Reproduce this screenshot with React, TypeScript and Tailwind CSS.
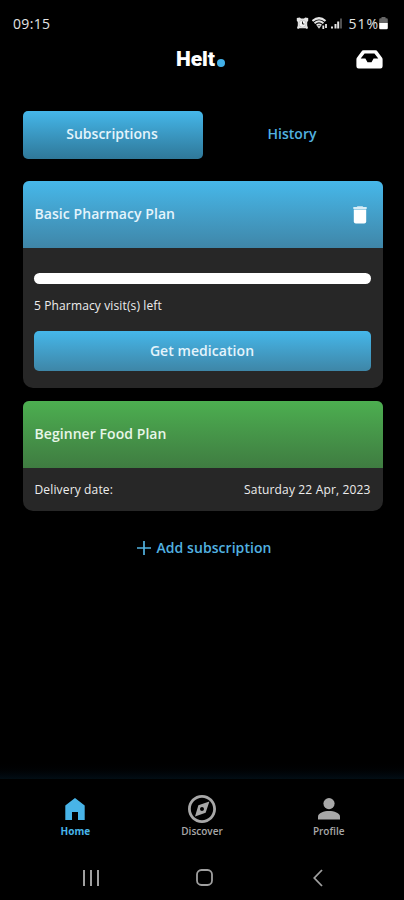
import React, { useState } from 'react';

type IconProps = { className?: string };

const AlarmIcon = ({ className }: IconProps) => (
  <svg viewBox="0 0 13 13" className={className}>
    <path
      fill="#e4e4e4"
      d="M.8 1 3.800.5l1.200 1h3l1.200-1 3 .5v2.800l-1 1.200v3.500l.8 2.500-1 1-1.500-.8H3.500l-1.500.8-1-1 .8-2.500V5l-1-1.200Z"
    />
    <circle cx="6.500" cy="6.700" r="3.500" fill="#f4f4f4" stroke="#999" strokeWidth=".4" />
    <path d="M6.500 4.500v2.500H8.300" fill="none" stroke="#222" strokeWidth="1" />
  </svg>
);

const WifiIcon = ({ className }: IconProps) => (
  <svg viewBox="0 0 16 13" className={className} fill="none" stroke="currentColor">
    <path d="M.5 4Q7-1.500 13.500 4" strokeWidth="2.200" />
    <path d="M2.500 6.200Q7 2.500 11.500 6.200" strokeWidth="1.900" />
    <path d="M4.600 8.400Q7 6.300 9.400 8.400" strokeWidth="1.800" />
    <path d="M5.500 9.300h3L7 11.300Z" fill="currentColor" strokeWidth=".6" />
    <path d="M11.300 8.500v3.500M14 7v4" strokeWidth="1.800" />
  </svg>
);

const SignalIcon = ({ className }: IconProps) => (
  <svg viewBox="0 0 12 12" className={className} fill="currentColor">
    <path d="M0 9.500h2v2H0ZM3.500 7h2v4.500h-2ZM6.200 4.500h2v7h-2Z" />
    <path d="M9 1.500h2v10H9Z" opacity=".35" />
  </svg>
);

const BatteryIcon = ({ className }: IconProps) => (
  <svg viewBox="0 0 9 13" className={className}>
    <path d="M2.500 0h4v1.300h1A1.300 1.300 0 0 1 8.800 2.600V6H.2V2.600a1.300 1.300 0 0 1 1.300-1.300h1Z" fill="#666" />
    <path d="M.2 6h8.600v5a1.300 1.300 0 0 1-1.300 1.300h-6A1.300 1.300 0 0 1 .2 11Z" fill="#fff" />
  </svg>
);

const InboxIcon = ({ className }: IconProps) => (
  <svg viewBox="0 0 27 19" className={className}>
    <path
      fillRule="evenodd"
      fill="#fff"
      d="M7.500.3h12a2.400 2.400 0 0 1 2 1.100l4.600 6.400c.3.500.5 1 .5 1.600v6.900a2.200 2.200 0 0 1-2.200 2.200H2.600A2.200 2.200 0 0 1 .4 16.300V9.400c0-.6.200-1.100.5-1.600l4.600-6.400a2.400 2.400 0 0 1 2-1.100ZM8.600 3.500 4.700 8.600h4.700l2.100 3.700h4l2.100-3.700h4.700l-3.900-5.100Z"
    />
  </svg>
);

const TrashIcon = ({ className }: IconProps) => (
  <svg viewBox="0 0 14 18" className={className} fill="#fff">
    <path d="M4.500.3h5l.8.7h3.400v2H.3V1h3.400Z" opacity=".8" />
    <path d="M.8 3.600h12.400v12a2 2 0 0 1-2 2H2.800a2 2 0 0 1-2-2Z" />
  </svg>
);

const HomeIcon = ({ className }: IconProps) => (
  <svg viewBox="0 0 20 22" className={className} fill="currentColor">
    <path d="M10 0 19.700 7.500V22H13v-8H7v8H.3V7.500Z" />
  </svg>
);

const CompassIcon = ({ className }: IconProps) => (
  <svg viewBox="2 2 20 20" className={className} fill="currentColor">
    <path d="M12 2C6.480 2 2 6.480 2 12s4.480 10 10 10 10-4.480 10-10S17.520 2 12 2zm0 18c-4.410 0-8-3.590-8-8s3.590-8 8-8 8 3.590 8 8-3.590 8-8 8z" />
    <path
      fillRule="evenodd"
      d="M7 17.300l2.400-8 7.900-2.600-2.700 8L7 17.300zM12 10.600c.8 0 1.400.6 1.400 1.400s-.6 1.400-1.400 1.400-1.400-.6-1.400-1.400.6-1.400 1.400-1.400z"
    />
  </svg>
);

const ProfileIcon = ({ className }: IconProps) => (
  <svg viewBox="0 0 22 22" className={className} fill="currentColor">
    <circle cx="11" cy="5.600" r="5.600" />
    <path d="M0 21.500v-3C0 15 6 13 11 13s11 2 11 5.500v3Z" />
  </svg>
);

const navItems = [
  { label: 'Home', Icon: HomeIcon, iconClass: 'w-5 h-[22px]' },
  { label: 'Discover', Icon: CompassIcon, iconClass: 'size-7' },
  { label: 'Profile', Icon: ProfileIcon, iconClass: 'size-[22px]' },
];

const StatusBar = () => (
  <div className="flex h-[46px] items-center justify-between pr-4 pl-[13px] text-[#e4e4e4]">
    <span className="text-[14px] tracking-[0.35px]">09:15</span>
    <div className="flex items-center">
      <AlarmIcon className="mr-[3px] size-[13px]" />
      <WifiIcon className="mr-[3px] h-[13px] w-4" />
      <SignalIcon className="mr-[5px] size-3" />
      <span className="text-[14px] tracking-[1px]">51%</span>
      <BatteryIcon className="h-[13px] w-[9px]" />
    </div>
  </div>
);

const Header = () => (
  <header className="grid h-[26px] grid-cols-3 items-center pr-[21px]">
    <span />
    <div className="flex items-baseline justify-center pt-px pl-[18px] font-['Roboto'] text-[21px] leading-none font-black text-white">
      Helt
      <span className="ml-[2px] size-2 translate-y-px rounded-full bg-[#42b0e8]" />
    </div>
    <button className="justify-self-end">
      <InboxIcon className="h-[19px] w-[27px]" />
    </button>
  </header>
);

const App: React.FC = () => {
  const [tab, setTab] = useState('Subscriptions');
  const [page, setPage] = useState('Home');

  return (
    <div className="flex h-[900px] w-[404px] flex-col overflow-hidden bg-black font-['Open_Sans',sans-serif]">
      <StatusBar />
      <Header />

      <main className="flex-1 pt-[39px] pr-[21.5px] pl-[22.5px]">
        <div className="grid h-[48px] grid-cols-2">
          {['Subscriptions', 'History'].map((name) => (
            <button
              key={name}
              onClick={() => setTab(name)}
              className={`rounded-[5px] pr-px pb-[3px] text-[14px] font-semibold ${
                tab === name
                  ? 'bg-linear-to-b from-[#45b7ea] to-[#2f7899] text-[#e4f4fc]'
                  : 'text-[#52b2e0]'
              }`}
            >
              {name}
            </button>
          ))}
        </div>

        <section className="mt-[22px] h-[207px] overflow-hidden rounded-t-[6px] rounded-b-[10px] bg-[#272727]">
          <div className="flex h-[67px] items-center justify-between bg-linear-to-b from-[#46b8ea] to-[#3f86a8] pr-4 pl-3">
            <h2 className="pb-[2px] text-[14px] font-semibold tracking-[0.06px] text-[#e4f4fc]">Basic Pharmacy Plan</h2>
            <TrashIcon className="h-[18px] w-[14px]" />
          </div>
          <div className="px-[11.5px] pt-[25px]">
            <div className="h-[11px] rounded-full bg-white" />
            <p className="mt-[13px] text-[12px] leading-[18px] tracking-[0.13px] text-[#ededed]">5 Pharmacy visit(s) left</p>
            <button className="mt-4 h-10 w-full rounded-[5px] bg-linear-to-b from-[#45b7ea] to-[#3e86a7] pr-px pb-[2px] text-[14px] font-semibold tracking-[0.06px] text-[#e4f4fc]">
              Get medication
            </button>
          </div>
        </section>

        <section className="mt-[13px] h-[110px] overflow-hidden rounded-t-[6px] rounded-b-[10px] bg-[#272727]">
          <div className="flex h-[67px] items-center bg-linear-to-b from-[#4caf50] to-[#3f7c41] px-3">
            <h2 className="pb-[2px] text-[14px] font-semibold tracking-[0.06px] text-[#e8f6e8]">Beginner Food Plan</h2>
          </div>
          <div className="flex h-[43px] items-center justify-between px-3 text-[12px] tracking-[0.15px] text-[#ededed]">
            <span>Delivery date:</span>
            <span>Saturday 22 Apr, 2023</span>
          </div>
        </section>

        <button className="mt-[26px] ml-[114.5px] flex items-center gap-[5.500px] text-[14px] font-semibold tracking-[0.06px] text-[#52b2e0]">
          <svg viewBox="0 0 14 14" className="size-[14px]" stroke="currentColor" strokeWidth="1.700">
            <path d="M7 0v14M0 7h14" />
          </svg>
          Add subscription
        </button>
      </main>

      <div className="h-[20px] bg-linear-to-b from-black to-[#020e15]" />
      <nav className="flex h-[67px] px-3 pt-[15px]">
        {navItems.map(({ label, Icon, iconClass }) => (
          <button
            key={label}
            onClick={() => setPage(label)}
            className={`flex flex-1 flex-col items-center text-[10px] ${
              page === label ? 'font-bold text-[#48b4e8]' : 'font-semibold text-[#a8a8a8]'
            }`}
          >
            <span className="flex h-[30px] items-center">
              <Icon className={iconClass} />
            </span>
            <span className="leading-[15px]">{label}</span>
          </button>
        ))}
      </nav>

      <div className="flex h-[54px] items-center justify-between pt-[9px] pr-[81px] pl-[83px] text-[#a0a0a0]">
        <svg viewBox="0 0 16 16" className="size-4" fill="none" stroke="currentColor" strokeWidth="2">
          <path d="M1 0v16M8 0v16M15 0v16" />
        </svg>
        <svg viewBox="0 0 17 17" className="mr-1 size-[17px]" fill="none" stroke="currentColor" strokeWidth="1.800">
          <rect x="1" y="1" width="15" height="15" rx="4.500" />
        </svg>
        <svg viewBox="0 0 10 18" className="h-[18px] w-[10px]" fill="none" stroke="currentColor" strokeWidth="1.800">
          <path d="M9 1 1.300 9 9 17" />
        </svg>
      </div>
    </div>
  );
};

export default App;
